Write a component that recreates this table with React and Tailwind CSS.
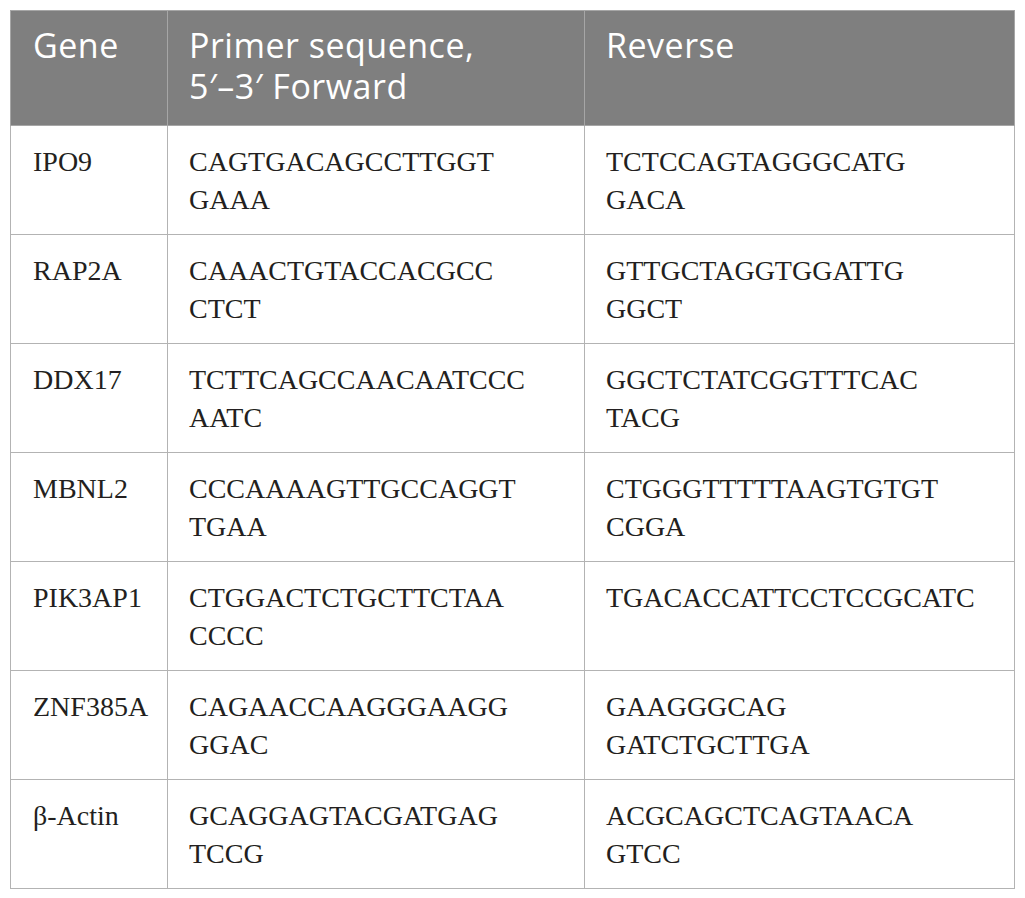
import React from "react";

const rows = [
  ["IPO9", ["CAGTGACAGCCTTGGT", "GAAA"], ["TCTCCAGTAGGGCATG", "GACA"]],
  ["RAP2A", ["CAAACTGTACCACGCC", "CTCT"], ["GTTGCTAGGTGGATTG", "GGCT"]],
  ["DDX17", ["TCTTCAGCCAACAATCCC", "AATC"], ["GGCTCTATCGGTTTCAC", "TACG"]],
  ["MBNL2", ["CCCAAAAGTTGCCAGGT", "TGAA"], ["CTGGGTTTTTAAGTGTGT", "CGGA"]],
  ["PIK3AP1", ["CTGGACTCTGCTTCTAA", "CCCC"], ["TGACACCATTCCTCCGCATC"]],
  ["ZNF385A", ["CAGAACCAAGGGAAGG", "GGAC"], ["GAAGGGCAG", "GATCTGCTTGA"]],
  ["β-Actin", ["GCAGGAGTACGATGAG", "TCCG"], ["ACGCAGCTCAGTAACA", "GTCC"]],
];

const Lines = ({ lines }) => (
  <>
    {lines.map((l, i) => (
      <div key={i}>{l}</div>
    ))}
  </>
);

export default function App() {
  return (
    <div className="w-[1025px] h-[898px] bg-white pt-[10px] pl-[10px]">
      <table className="table-fixed border-collapse w-[1004px]">
        <colgroup>
          <col className="w-[157px]" />
          <col className="w-[417px]" />
          <col className="w-[430px]" />
        </colgroup>
        <thead>
          <tr className="h-[115px] bg-[#7f7f7f] text-white text-[34px] leading-[41px] tracking-[0.5px] [font-family:'Open_Sans',sans-serif]">
            <th className="border border-[#a6a6a6] align-top text-left font-normal pl-[22px] pt-[14px]">Gene</th>
            <th className="border border-[#a6a6a6] align-top text-left font-normal pl-[21px] pt-[14px]">
              <div>Primer sequence,</div>
              <div>5′–3′ Forward</div>
            </th>
            <th className="border border-[#a6a6a6] align-top text-left font-normal pl-[21px] pt-[14px]">Reverse</th>
          </tr>
        </thead>
        <tbody className="text-[#231f20] text-[28px] leading-[38px] [font-family:'Liberation_Serif',serif]">
          {rows.map(([g, f, r]) => (
            <tr key={g} className="h-[109px]">
              <td className="border border-[#b3b3b3] align-top pl-[22px] pt-[17px]">{g}</td>
              <td className="border border-[#b3b3b3] align-top pl-[21px] pt-[17px]">
                <Lines lines={f} />
              </td>
              <td className="border border-[#b3b3b3] align-top pl-[21px] pt-[17px]">
                <Lines lines={r} />
              </td>
            </tr>
          ))}
        </tbody>
      </table>
    </div>
  );
}
